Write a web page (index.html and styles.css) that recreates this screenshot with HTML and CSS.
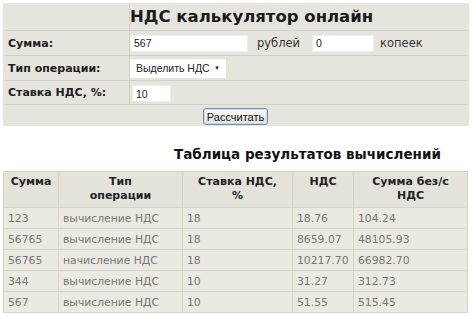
FILE: index.html
```html
<!DOCTYPE html>
<html>
<head>
<meta charset="utf-8">
<link rel="stylesheet" href="styles.css">
</head>
<body>
<table class="calc">
  <tr class="row-title">
    <td class="lbl"></td>
    <td class="title-cell"><h1 class="title">НДС калькулятор онлайн</h1></td>
  </tr>
  <tr class="row r1">
    <td class="lbl">Сумма:</td>
    <td class="val">
      <div class="line">
        <input class="inp inp-sum" type="text" value="567">
        <span class="unit">рублей</span>
        <input class="inp inp-kop" type="text" value="0">
        <span class="unit">копеек</span>
      </div>
    </td>
  </tr>
  <tr class="row r2">
    <td class="lbl">Тип операции:</td>
    <td class="val">
      <div class="sel">
        <span class="sel-text">Выделить НДС</span>
        <span class="sel-arrow">▼</span>
      </div>
    </td>
  </tr>
  <tr class="row r3">
    <td class="lbl">Ставка НДС, %:</td>
    <td class="val"><input class="inp inp-rate" type="text" value="10"></td>
  </tr>
  <tr class="row r4">
    <td colspan="2" class="btn-cell"><button class="btn">Рассчитать</button></td>
  </tr>
</table>

<h2 class="res-title">Таблица результатов вычислений</h2>

<table class="res">
  <colgroup>
    <col class="c1"><col class="c2"><col class="c3"><col class="c4"><col class="c5">
  </colgroup>
  <thead>
    <tr>
      <th>Сумма</th>
      <th>Тип<br>операции</th>
      <th>Ставка НДС,<br>%</th>
      <th>НДС</th>
      <th>Сумма без/с<br>НДС</th>
    </tr>
  </thead>
  <tbody>
    <tr><td>123</td><td>вычисление НДС</td><td>18</td><td>18.76</td><td>104.24</td></tr>
    <tr><td>56765</td><td>вычисление НДС</td><td>18</td><td>8659.07</td><td>48105.93</td></tr>
    <tr><td>56765</td><td>начисление НДС</td><td>18</td><td>10217.70</td><td>66982.70</td></tr>
    <tr><td>344</td><td>вычисление НДС</td><td>10</td><td>31.27</td><td>312.73</td></tr>
    <tr><td>567</td><td>вычисление НДС</td><td>10</td><td>51.55</td><td>515.45</td></tr>
  </tbody>
</table>
</body>
</html>
```

FILE: styles.css
```css
html, body {
  margin: 0;
  padding: 0;
  background: #ffffff;
}
body {
  padding: 3px;
  font-family: "DejaVu Sans", Verdana, sans-serif;
  color: #222;
  overflow: hidden;
}
.calc {
  width: 466px;
  border-collapse: collapse;
  background: #e6e5dd;
}
.calc td {
  padding: 0;
  vertical-align: middle;
}
.calc .lbl {
  width: 121px;
  padding-left: 5px;
  font-weight: bold;
  font-size: 11px;
  color: #1e1e1e;
  border-right: 1px solid #d2d1c8;
  white-space: nowrap;
}
.row td {
  border-top: 1px solid #f6f5f1;
  border-bottom: 1px solid #d2d1c8;
}
.row-title td { height: 27px; border-bottom: 1px solid #d2d1c8; }
.r1 td { height: 24px; }
.r2 td { height: 24px; }
.r3 td { height: 23px; }
.r4 td { height: 21px; border-bottom: none; }
.title {
  margin: 0;
  font-size: 16.5px;
  font-weight: bold;
  color: #1a1a1a;
  white-space: nowrap;
}
.val { padding-left: 1px; }
.line {
  display: flex;
  align-items: center;
}
.inp {
  box-sizing: border-box;
  height: 17px;
  border: 1px solid #eeeeea;
  background: #fff;
  font-family: "Liberation Sans", Arial, sans-serif;
  font-size: 10.5px;
  color: #222;
  padding: 0 3px;
  margin: 0;
  outline: none;
}
.inp-sum { width: 118px; }
.inp-kop { width: 62px; }
.inp-rate { width: 39px; margin-left: 2px; }
.unit {
  font-size: 11.5px;
  color: #333;
  margin-left: 9px;
  margin-right: 12px;
}
.unit:last-child { margin-left: 6px; }
.sel {
  box-sizing: border-box;
  width: 96px;
  height: 19px;
  background: #fff;
  display: flex;
  align-items: center;
  justify-content: space-between;
  padding: 0 6px 0 6px;
  font-family: "Liberation Sans", Arial, sans-serif;
  font-size: 10.5px;
  color: #222;
  white-space: nowrap;
}
.sel-arrow {
  font-size: 6px;
  color: #222;
}
.btn-cell { text-align: left; padding-left: 200px !important; }
.btn {
  box-sizing: border-box;
  width: 65px;
  height: 17px;
  margin: 0;
  padding: 0;
  font-family: "Liberation Sans", Arial, sans-serif;
  font-size: 11px;
  color: #111;
  background: linear-gradient(#fbfbfa, #e4e3dc);
  border: 1px solid #6f8fb5;
  border-radius: 3px;
  box-shadow: inset 0 0 0 1px #c9d7ea;
}
.res-title {
  margin: 20px 0 0 0;
  padding-left: 171px;
  font-size: 13.5px;
  font-weight: bold;
  color: #111;
  height: 25px;
  line-height: 16px;
  white-space: nowrap;
}
.res {
  width: 464px;
  border-collapse: collapse;
  table-layout: fixed;
  background: #eae9e2;
}
.c1 { width: 55px; }
.c2 { width: 124px; }
.c3 { width: 110px; }
.c4 { width: 61px; }
.c5 { width: 114px; }
.res th, .res td {
  border: 1px solid #d6d4c4;
}
.res th {
  height: 32px;
  font-size: 11px;
  font-weight: bold;
  color: #222;
  background: #e4e3db;
  vertical-align: top;
  padding: 3px 2px 0;
  line-height: 14px;
  text-align: center;
}
.res td {
  height: 20px;
  font-size: 10.8px;
  color: #777;
  padding: 0 0 0 4px;
  white-space: nowrap;
  overflow: hidden;
}
```
